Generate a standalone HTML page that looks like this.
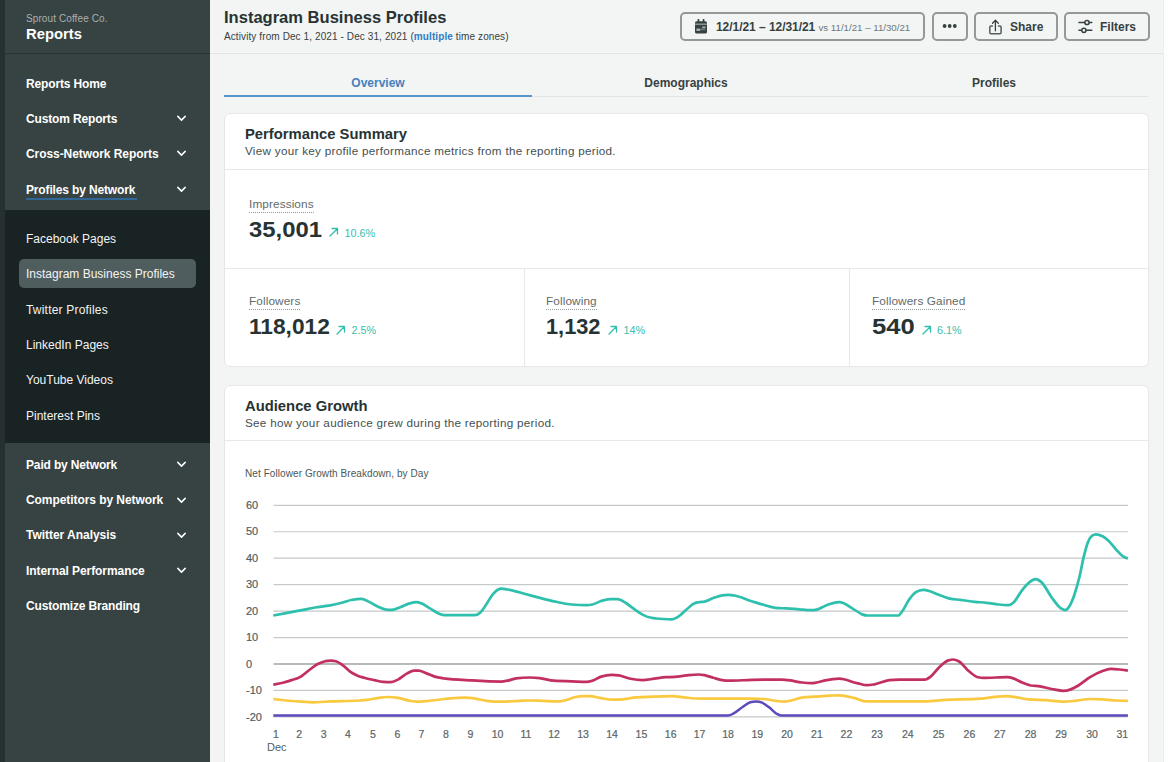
<!DOCTYPE html>
<html lang="en">
<head>
<meta charset="utf-8">
<title>Instagram Business Profiles - Reports</title>
<style>
*{box-sizing:border-box;margin:0;padding:0}
html,body{width:1168px;height:762px;overflow:hidden;background:#f3f4f4}
body{font-family:"Liberation Sans",sans-serif;color:#273333;position:relative;-webkit-font-smoothing:antialiased}
.abs{position:absolute;white-space:nowrap}
/* sidebar */
#strip{left:0;top:0;width:5px;height:762px;background:#263031}
#side{left:5px;top:0;width:205px;height:762px;background:#374242}
#sidehead{left:5px;top:0;width:205px;height:54px;border-bottom:1px solid #2a3435}
#sub{left:5px;top:210px;width:205px;height:233px;background:#1a2324}
#active{left:19px;top:259px;width:177px;height:29px;border-radius:5px;background:#505d5e}
.org{left:26px;top:12.7px;font-size:10px;line-height:12px;color:#a9b0b1;letter-spacing:.1px}
.rep{left:26px;top:25px;font-size:14.8px;line-height:18px;font-weight:bold;color:#fff;letter-spacing:0}
.nav{left:26px;font-size:12px;line-height:16px;font-weight:bold;color:#fff;letter-spacing:-.15px}
.snav{left:26px;font-size:12px;line-height:16px;color:#f3f4f4}
.chev{left:176px;width:11px;height:7px}
.ul{left:26px;top:197.6px;width:111px;height:2px;background:#2f6da6;opacity:.85}
/* header */
#hdr{left:210px;top:0;width:954px;height:54px;border-bottom:1px solid #e3e5e5;background:#f3f4f4}
#rstrip{left:1163px;top:0;width:5px;height:762px;background:#fdfdfd;border-left:1px solid #eceeee}
.title{left:224px;top:8.3px;font-size:16.55px;line-height:20px;font-weight:bold;color:#273333;letter-spacing:0}
.subt{left:224px;top:31px;font-size:10px;line-height:12px;color:#364141;letter-spacing:.1px}
.subt b{color:#2f7dc4}
.btn{top:12px;height:29px;border:2px solid #939899;border-radius:5px;background:#f3f4f4}
.btxt{font-size:12px;line-height:14px;font-weight:bold;color:#364141}
/* tabs */
.tab{top:75.8px;font-size:12px;line-height:14px;font-weight:bold;color:#364141;text-align:center;width:308px}
.tabline{left:224px;top:96px;width:924px;height:1px;background:#e3e5e5}
.tabact{left:224px;top:95px;width:308px;height:2px;background:#5a94cf}
/* cards */
.card{left:224px;width:925px;background:#fff;border:1px solid #e6e8e8;border-radius:6px}
.hline{height:1px;background:#e7e9e9}
.vline{width:1px;background:#e7e9e9}
.ctitle{left:245px;font-size:14.8px;line-height:18px;font-weight:bold;color:#273333}
.cdesc{left:245px;font-size:11.7px;line-height:14px;color:#445051;letter-spacing:.28px}
.mlabel{font-size:11.8px;line-height:14px;color:#5f6b6c;border-bottom:1px dotted #929a9b;padding-bottom:1px;letter-spacing:.1px}
.mval{font-size:22.2px;line-height:26px;font-weight:bold;color:#273333;letter-spacing:0;transform-origin:0 50%}
.mdelta{font-size:10.8px;line-height:14px;color:#35c0ad}
.arr{width:10px;height:10px}
.ylab{left:246px;font-size:11px;line-height:12px;color:#515e5f;-webkit-text-stroke:.2px #515e5f}
.xlabs span{position:absolute;top:728px;width:30px;margin-left:-15px;text-align:center;font-size:10.5px;line-height:12px;color:#5a6667;-webkit-text-stroke:.2px #5a6667}
.ico{position:absolute;overflow:visible}
.chart{position:absolute;left:0;top:0}
</style>
</head>
<body>
<div class="abs" id="side"></div>
<div class="abs" id="strip"></div>
<div class="abs" id="sidehead"></div>
<div class="abs" id="sub"></div>
<div class="abs" id="active"></div>
<div class="abs org">Sprout Coffee Co.</div>
<div class="abs rep">Reports</div>

<div class="abs nav" style="top:76px">Reports Home</div>
<div class="abs nav" style="top:111px">Custom Reports</div>
<div class="abs nav" style="top:146.4px;letter-spacing:-.07px">Cross-Network Reports</div>
<div class="abs nav" style="top:181.6px">Profiles by Network</div>
<div class="abs ul"></div>
<svg class="abs chev" style="top:115px" viewBox="0 0 11 7"><path d="M1.8 1.4l3.7 3.7 3.7-3.7" fill="none" stroke="#fff" stroke-width="1.5" stroke-linecap="round" stroke-linejoin="round"/></svg>
<svg class="abs chev" style="top:150px" viewBox="0 0 11 7"><path d="M1.8 1.4l3.7 3.7 3.7-3.7" fill="none" stroke="#fff" stroke-width="1.5" stroke-linecap="round" stroke-linejoin="round"/></svg>
<svg class="abs chev" style="top:186px" viewBox="0 0 11 7"><path d="M1.8 1.4l3.7 3.7 3.7-3.7" fill="none" stroke="#fff" stroke-width="1.5" stroke-linecap="round" stroke-linejoin="round"/></svg>

<div class="abs snav" style="top:231px">Facebook Pages</div>
<div class="abs snav" style="top:266.2px">Instagram Business Profiles</div>
<div class="abs snav" style="top:301.7px;letter-spacing:.2px">Twitter Profiles</div>
<div class="abs snav" style="top:337px">LinkedIn Pages</div>
<div class="abs snav" style="top:372px">YouTube Videos</div>
<div class="abs snav" style="top:407.7px">Pinterest Pins</div>

<div class="abs nav" style="top:457px">Paid by Network</div>
<div class="abs nav" style="top:492px;letter-spacing:-.07px">Competitors by Network</div>
<div class="abs nav" style="top:527.4px;letter-spacing:-.03px">Twitter Analysis</div>
<div class="abs nav" style="top:563px;letter-spacing:-.07px">Internal Performance</div>
<div class="abs nav" style="top:598.4px">Customize Branding</div>
<svg class="abs chev" style="top:461px" viewBox="0 0 11 7"><path d="M1.8 1.4l3.7 3.7 3.7-3.7" fill="none" stroke="#fff" stroke-width="1.5" stroke-linecap="round" stroke-linejoin="round"/></svg>
<svg class="abs chev" style="top:497px" viewBox="0 0 11 7"><path d="M1.8 1.4l3.7 3.7 3.7-3.7" fill="none" stroke="#fff" stroke-width="1.5" stroke-linecap="round" stroke-linejoin="round"/></svg>
<svg class="abs chev" style="top:532px" viewBox="0 0 11 7"><path d="M1.8 1.4l3.7 3.7 3.7-3.7" fill="none" stroke="#fff" stroke-width="1.5" stroke-linecap="round" stroke-linejoin="round"/></svg>
<svg class="abs chev" style="top:567px" viewBox="0 0 11 7"><path d="M1.8 1.4l3.7 3.7 3.7-3.7" fill="none" stroke="#fff" stroke-width="1.5" stroke-linecap="round" stroke-linejoin="round"/></svg>

<!-- header -->
<div class="abs" id="hdr"></div>
<div class="abs" id="rstrip"></div>
<div class="abs title">Instagram Business Profiles</div>
<div class="abs subt">Activity from Dec 1, 2021 - Dec 31, 2021 (<b>multiple</b> time zones)</div>

<div class="abs btn" style="left:680px;width:245px"></div>
<div class="abs btn" style="left:932px;width:36px"></div>
<div class="abs btn" style="left:974px;width:84px"></div>
<div class="abs btn" style="left:1064px;width:86px"></div>
<div class="abs btxt" style="left:716px;top:19.5px;letter-spacing:-.05px">12/1/21 – 12/31/21 <span style="font-weight:normal;font-size:9.7px;color:#6e797a;letter-spacing:0">vs 11/1/21 – 11/30/21</span></div>
<div class="abs btxt" style="left:1010px;top:19.5px">Share</div>
<div class="abs btxt" style="left:1100px;top:19.5px">Filters</div>


<!-- icons -->
<svg class="ico" style="left:695px;top:19px" width="12" height="14.5" viewBox="0 0 12 14.5">
  <rect x="0" y="2.2" width="12" height="12.3" rx="1.6" fill="#364141"/>
  <rect x="2.6" y="0" width="1.7" height="3.4" rx=".6" fill="#364141"/>
  <rect x="7.7" y="0" width="1.7" height="3.4" rx=".6" fill="#364141"/>
  <rect x="0" y="4.5" width="12" height="1.4" fill="#f3f4f4" opacity=".5"/>
  <rect x="7.2" y="7.5" width="3.3" height="1.7" fill="#f3f4f4" opacity=".6"/>
  <rect x="1.4" y="9.6" width="3.7" height="2.3" fill="#f3f4f4" opacity=".65"/>
  <rect x="5.1" y="9.6" width="5.2" height="1.6" fill="#f3f4f4" opacity=".3"/>
</svg>
<svg class="ico" style="left:940px;top:22px" width="20" height="8" viewBox="0 0 20 8">
  <circle cx="4.6" cy="4" r="1.9" fill="#364141"/><circle cx="9.7" cy="4" r="1.9" fill="#364141"/><circle cx="14.8" cy="4" r="1.9" fill="#364141"/>
</svg>
<svg class="ico" style="left:988px;top:19px" width="15" height="17" viewBox="988 19 15 17" fill="none" stroke="#515e5f" stroke-width="1.5" stroke-linecap="round" stroke-linejoin="round">
  <path d="M992.4,26H991a1.2,1.2 0 0 0 -1.2,1.2v5.4a1.2,1.2 0 0 0 1.2,1.2h8.9a1.2,1.2 0 0 0 1.2,-1.2v-5.4a1.2,1.2 0 0 0 -1.2,-1.2h-1.4"/>
  <path d="M995.4,30.8V20.4M992.5,23.2L995.4,20.3L998.3,23.2" stroke="#364141" stroke-width="1.3"/>
</svg>
<svg class="ico" style="left:1078px;top:18px" width="16" height="17" viewBox="1078 18 16 17" fill="none" stroke="#364141" stroke-width="1.5" stroke-linecap="round">
  <path d="M1079,22.5h5.4M1089.6,22.5h2.2M1079,30.3h2.3M1086.5,30.3h5.3"/>
  <circle cx="1087" cy="22.5" r="2.1"/><circle cx="1083.9" cy="30.3" r="2.1"/>
</svg>
<!-- tabs -->
<div class="abs tabline"></div>
<div class="abs tabact"></div>
<div class="abs tab" style="left:224px;color:#4681bd">Overview</div>
<div class="abs tab" style="left:532px">Demographics</div>
<div class="abs tab" style="left:840px">Profiles</div>

<!-- card 1 -->
<div class="abs card" style="top:113px;height:254px"></div>
<div class="abs ctitle" style="top:125px">Performance Summary</div>
<div class="abs cdesc" style="top:144px">View your key profile performance metrics from the reporting period.</div>
<div class="abs hline" style="left:225px;top:168.5px;width:923px"></div>
<div class="abs hline" style="left:225px;top:268px;width:923px"></div>
<div class="abs vline" style="left:524px;top:269px;height:97px"></div>
<div class="abs vline" style="left:849px;top:269px;height:97px"></div>

<div class="abs mlabel" style="left:249px;top:197px">Impressions</div>
<div class="abs mval" id="v1" style="left:249px;top:216.5px;transform:scaleX(1.074)">35,001</div>
<div class="abs mdelta" style="left:344.4px;top:225.6px">10.6%</div>

<div class="abs mlabel" style="left:249px;top:294px">Followers</div>
<div class="abs mval" id="v2" style="left:248.7px;top:313.7px;transform:scaleX(1.023)">118,012</div>
<div class="abs mdelta" style="left:351.6px;top:322.9px">2.5%</div>

<div class="abs mlabel" style="left:546px;top:294px">Following</div>
<div class="abs mval" id="v3" style="left:546.1px;top:313.7px;transform:scaleX(.981)">1,132</div>
<div class="abs mdelta" style="left:623.4px;top:322.9px">14%</div>

<div class="abs mlabel" style="left:872px;top:294px">Followers Gained</div>
<div class="abs mval" id="v4" style="left:872.2px;top:313.7px;transform:scaleX(1.154)">540</div>
<div class="abs mdelta" style="left:937px;top:322.9px">6.1%</div>

<svg class="ico" style="left:329px;top:227.4px" width="10" height="10" viewBox="0 0 10 10" fill="none" stroke="#2fbfab" stroke-width="1.3" stroke-linecap="round" stroke-linejoin="round"><path d="M1,9L8.3,1.7M3,1.5H8.5V7"/></svg>
<svg class="ico" style="left:336.3px;top:324.6px" width="10" height="10" viewBox="0 0 10 10" fill="none" stroke="#2fbfab" stroke-width="1.3" stroke-linecap="round" stroke-linejoin="round"><path d="M1,9L8.3,1.7M3,1.5H8.5V7"/></svg>
<svg class="ico" style="left:608.3px;top:324.6px" width="10" height="10" viewBox="0 0 10 10" fill="none" stroke="#2fbfab" stroke-width="1.3" stroke-linecap="round" stroke-linejoin="round"><path d="M1,9L8.3,1.7M3,1.5H8.5V7"/></svg>
<svg class="ico" style="left:921.9px;top:324.6px" width="10" height="10" viewBox="0 0 10 10" fill="none" stroke="#2fbfab" stroke-width="1.3" stroke-linecap="round" stroke-linejoin="round"><path d="M1,9L8.3,1.7M3,1.5H8.5V7"/></svg>
<!-- card 2 -->
<div class="abs card" style="top:385px;height:400px"></div>
<div class="abs ctitle" style="top:397px">Audience Growth</div>
<div class="abs cdesc" style="top:416px">See how your audience grew during the reporting period.</div>
<div class="abs hline" style="left:225px;top:440px;width:923px"></div>
<div class="abs" style="left:245px;top:467.9px;font-size:10px;line-height:12px;color:#4b5859;letter-spacing:.08px">Net Follower Growth Breakdown, by Day</div>

<div class="abs ylab" style="top:499px">60</div>
<div class="abs ylab" style="top:525px">50</div>
<div class="abs ylab" style="top:552px">40</div>
<div class="abs ylab" style="top:578px">30</div>
<div class="abs ylab" style="top:605px">20</div>
<div class="abs ylab" style="top:631px">10</div>
<div class="abs ylab" style="top:658px">0</div>
<div class="abs ylab" style="top:684px">-10</div>
<div class="abs ylab" style="top:711px">-20</div>

<svg class="chart" width="1168" height="762" viewBox="0 0 1168 762">
  <g stroke="#c5c9c9" stroke-width="1.2">
    <line x1="273.5" x2="1128" y1="716.90" y2="716.90"/><line x1="273.5" x2="1128" y1="690.45" y2="690.45"/><line x1="273.5" x2="1128" y1="637.55" y2="637.55"/><line x1="273.5" x2="1128" y1="611.10" y2="611.10"/><line x1="273.5" x2="1128" y1="584.65" y2="584.65"/><line x1="273.5" x2="1128" y1="558.20" y2="558.20"/><line x1="273.5" x2="1128" y1="531.75" y2="531.75"/><line x1="273.5" x2="1128" y1="505.30" y2="505.30"/>
  </g>
  <line x1="273.5" x2="1128" y1="664.00" y2="664.00" stroke="#9fa5a5" stroke-width="1.4"/>
  <g fill="none" stroke-linecap="butt" stroke-linejoin="round">
    <path d="M273.3,699.0C282.7,700.1 292.2,701.1 301.6,701.7C305.2,701.9 308.7,702.3 312.3,702.3C318.3,702.3 324.3,701.7 330.3,701.4C339.7,701.0 349.2,701.1 358.6,700.5C361.4,700.3 364.1,700.2 366.9,699.9C371.3,699.4 375.7,698.1 380.2,697.6C383.1,697.2 386.1,697.0 389.0,697.0C392.0,697.0 394.9,697.4 397.9,697.9C401.8,698.5 405.8,700.1 409.7,700.8C412.2,701.2 414.6,701.7 417.1,701.7C420.0,701.7 423.0,701.4 425.9,701.1C432.1,700.6 438.2,699.7 444.3,699.0C448.5,698.6 452.7,698.1 457.0,697.9C459.9,697.7 462.9,697.6 465.8,697.6C468.1,697.6 470.3,697.9 472.6,698.2C477.2,698.7 481.9,700.3 486.5,700.8C491.4,701.4 496.3,701.7 501.3,701.7C507.2,701.7 513.1,701.0 519.0,700.8C522.5,700.7 526.1,700.5 529.6,700.5C533.9,700.5 538.3,700.7 542.6,700.8C548.3,701.0 554.0,701.4 559.8,701.4C561.7,701.4 563.7,700.7 565.7,700.2C568.6,699.5 571.6,698.0 574.5,697.3C577.5,696.6 580.4,696.1 583.4,696.1C585.4,696.1 587.3,696.1 589.3,696.1C593.2,696.1 597.2,697.6 601.1,698.2C605.0,698.7 609.0,699.6 612.9,699.6C615.9,699.6 618.8,699.5 621.8,699.3C626.7,699.0 631.6,697.6 636.5,697.3C642.5,696.9 648.4,696.9 654.3,696.7C660.2,696.5 666.1,696.1 672.0,696.1C675.9,696.1 679.9,696.9 683.8,697.3C687.7,697.7 691.7,698.3 695.6,698.5C702.5,698.6 709.4,698.7 716.3,698.7C728.1,698.7 739.9,698.7 751.7,698.7C755.7,698.7 759.6,698.8 763.5,699.0C767.5,699.2 771.4,700.3 775.3,700.8C778.3,701.2 781.3,701.7 784.2,701.7C786.2,701.7 788.1,701.2 790.1,700.8C794.0,700.1 798.0,698.1 801.9,697.6C806.2,697.0 810.4,697.0 814.6,696.7C818.3,696.4 821.9,696.2 825.5,695.9C828.0,695.8 830.5,695.6 832.9,695.5C835.0,695.4 837.2,695.3 839.3,695.3C844.1,695.3 849.0,696.7 853.9,697.9C857.8,698.8 861.7,701.4 865.7,701.4C868.6,701.4 871.6,701.4 874.5,701.4C891.3,701.4 908.0,701.4 924.7,701.4C931.6,701.4 938.5,700.3 945.4,699.9C957.2,699.3 969.0,699.5 980.8,698.7C985.8,698.4 990.7,697.3 995.6,696.8C999.1,696.5 1002.5,696.1 1005.9,696.1C1009.4,696.1 1012.8,696.8 1016.3,697.3C1020.2,697.8 1024.2,698.9 1028.1,699.3C1034.0,699.9 1039.9,699.8 1045.8,700.2C1051.7,700.6 1057.6,701.7 1063.5,701.7C1067.5,701.7 1071.4,701.2 1075.3,700.8C1080.3,700.3 1085.2,699.0 1090.1,699.0C1094.0,699.0 1098.0,699.1 1101.9,699.3C1106.8,699.6 1111.8,700.3 1116.7,700.5C1120.4,700.7 1124.2,700.8 1127.9,700.8" stroke="#f9c940" stroke-width="2.7"/>
    <path d="M273.3,715.6C424.9,715.6 576.5,715.6 728.1,715.6C730.1,715.6 732.0,714.3 734.0,713.2C737.0,711.6 739.9,708.7 742.9,706.7C745.3,705.1 747.8,703.0 750.2,702.3C752.2,701.7 754.2,701.4 756.2,701.4C758.1,701.4 760.1,701.8 762.1,702.6C764.5,703.6 767.0,705.7 769.4,707.6C771.9,709.5 774.4,712.4 776.8,713.8C778.3,714.6 779.8,715.6 781.3,715.6C896.8,715.6 1012.4,715.6 1127.9,715.6" stroke="#5b4bbd" stroke-width="2.5"/>
    <path d="M273.3,684.6C276.4,684.0 279.6,683.4 282.7,682.7C285.7,681.9 288.6,681.1 291.6,680.1C294.5,679.2 297.5,678.6 300.4,676.9C303.4,675.2 306.3,672.1 309.3,670.0C312.3,667.8 315.2,665.3 318.2,663.8C320.5,662.6 322.9,661.8 325.2,661.2C327.0,660.9 328.8,660.7 330.6,660.7C332.3,660.7 334.1,660.8 335.9,661.2C338.2,661.8 340.6,663.7 343.0,665.4C345.3,667.1 347.7,669.9 350.1,671.6C352.4,673.3 354.8,674.4 357.1,675.4C359.5,676.5 361.9,677.1 364.2,677.8C367.6,678.8 370.9,679.4 374.3,680.1C377.2,680.8 380.2,681.7 383.1,681.9C385.6,682.1 388.0,682.2 390.5,682.2C393.0,682.2 395.4,680.8 397.9,679.6C400.8,678.1 403.8,675.2 406.8,673.6C409.2,672.4 411.7,670.7 414.1,670.7C415.6,670.7 417.1,670.7 418.6,670.7C421.0,670.7 423.5,672.2 425.9,673.1C428.9,674.1 431.9,675.7 434.8,676.6C437.8,677.5 440.7,677.9 443.7,678.4C453.0,679.7 462.4,679.9 471.7,680.4C481.6,681.0 491.4,681.6 501.3,681.6C503.2,681.6 505.2,681.1 507.2,680.7C510.1,680.2 513.1,678.8 516.0,678.4C520.5,677.8 525.1,677.5 529.6,677.5C532.9,677.5 536.3,677.7 539.6,678.1C544.4,678.6 549.1,680.4 553.9,680.7C559.8,681.1 565.7,681.1 571.6,681.3C576.6,681.5 581.6,681.9 586.6,681.9C588.5,681.9 590.4,681.3 592.3,680.7C595.2,679.8 598.2,677.6 601.1,676.6C604.6,675.5 608.0,674.8 611.4,674.8C613.9,674.8 616.4,675.0 618.8,675.4C622.8,676.0 626.7,677.9 630.6,678.7C634.6,679.5 638.5,680.1 642.5,680.1C646.4,680.1 650.3,679.2 654.3,678.7C658.2,678.2 662.1,677.5 666.1,677.2C669.0,677.0 672.0,677.1 674.9,676.9C678.9,676.6 682.8,675.8 686.8,675.4C690.7,675.0 694.6,674.5 698.6,674.5C700.5,674.5 702.5,674.8 704.5,675.1C707.4,675.7 710.4,676.9 713.3,677.8C716.3,678.6 719.2,679.7 722.2,680.1C724.6,680.5 726.9,680.7 729.3,680.7C736.8,680.7 744.2,680.0 751.7,679.8C761.6,679.7 771.4,679.6 781.3,679.6C784.2,679.6 787.2,680.0 790.1,680.4C794.0,681.0 798.0,682.1 801.9,682.5C804.9,682.8 807.8,683.1 810.8,683.1C812.8,683.1 814.7,682.8 816.7,682.5C819.6,682.1 822.6,681.0 825.5,680.4C828.0,679.9 830.5,679.4 832.9,679.1C835.0,678.9 837.2,678.7 839.3,678.7C845.1,678.7 851.0,681.8 856.8,683.1C860.3,683.8 863.7,685.2 867.1,685.2C869.6,685.2 872.1,684.7 874.5,684.3C879.5,683.4 884.4,680.7 889.3,680.1C892.7,679.7 896.2,679.6 899.6,679.6C908.0,679.6 916.4,679.6 924.7,679.6C926.7,679.6 928.7,678.1 930.6,676.6C933.6,674.4 936.5,669.6 939.5,666.9C942.5,664.1 945.4,661.4 948.4,660.4C950.0,659.8 951.7,659.5 953.4,659.5C955.2,659.5 956.9,660.3 958.7,661.2C962.1,663.1 965.6,668.5 969.0,671.3C972.0,673.7 974.9,676.6 977.9,677.2C979.9,677.6 981.8,677.8 983.8,677.8C991.7,677.8 999.5,677.2 1007.4,677.2C1009.4,677.2 1011.4,677.8 1013.3,678.4C1016.3,679.3 1019.2,681.3 1022.2,682.5C1025.1,683.7 1028.1,684.9 1031.0,685.5C1034.0,686.0 1037.0,685.9 1039.9,686.3C1043.8,686.9 1047.8,688.3 1051.7,689.0C1055.7,689.7 1059.6,690.8 1063.5,690.8C1065.5,690.8 1067.5,690.5 1069.4,689.9C1072.4,689.0 1075.3,687.2 1078.3,685.5C1082.2,683.2 1086.2,679.6 1090.1,677.2C1094.0,674.8 1098.0,672.7 1101.9,671.3C1104.9,670.2 1107.8,668.9 1110.8,668.9C1113.7,668.9 1116.7,669.2 1119.6,669.5C1122.4,669.8 1125.2,670.2 1127.9,670.7" stroke="#c2305f" stroke-width="2.7"/>
    <path d="M273.3,615.5C282.7,613.7 292.2,612.0 301.6,610.2C306.1,609.3 310.7,608.3 315.2,607.5C320.2,606.7 325.2,606.4 330.3,605.4C334.1,604.7 337.9,603.8 341.8,602.8C345.2,601.9 348.7,600.5 352.1,599.8C355.1,599.3 358.0,598.9 361.0,598.9C362.9,598.9 364.9,599.9 366.9,600.7C370.3,602.0 373.8,604.8 377.2,606.3C380.2,607.6 383.1,609.3 386.1,609.6C388.0,609.8 390.0,609.9 392.0,609.9C394.9,609.9 397.9,608.0 400.8,606.9C403.8,605.8 406.8,604.2 409.7,603.4C411.9,602.8 414.0,602.2 416.2,602.2C418.0,602.2 419.7,602.7 421.5,603.4C424.5,604.4 427.4,607.0 430.4,608.7C433.3,610.4 436.3,612.5 439.2,613.7C440.9,614.4 442.6,615.2 444.3,615.2C454.4,615.2 464.5,615.2 474.7,615.2C476.6,615.2 478.6,614.1 480.6,612.2C482.5,610.3 484.5,606.9 486.5,604.0C488.5,601.0 490.4,597.2 492.4,594.8C494.4,592.4 496.3,590.4 498.3,589.5C499.3,589.0 500.3,588.7 501.3,588.7C503.2,588.7 505.2,589.2 507.2,589.5C514.6,590.6 522.1,593.1 529.6,595.1C533.9,596.2 538.3,597.5 542.6,598.6C547.8,600.0 553.1,601.1 558.3,602.2C562.7,603.1 567.1,604.2 571.6,604.5C576.6,604.9 581.6,605.1 586.6,605.1C588.5,605.1 590.4,604.9 592.3,604.5C595.2,603.9 598.2,601.9 601.1,601.0C604.1,600.1 607.0,599.2 610.0,599.2C612.4,599.2 614.9,599.2 617.4,599.2C619.8,599.2 622.3,600.8 624.7,602.2C627.7,603.8 630.6,606.6 633.6,608.7C636.5,610.7 639.5,613.1 642.5,614.6C645.4,616.1 648.4,617.2 651.3,617.8C655.3,618.6 659.2,618.8 663.1,619.0C666.1,619.2 669.0,619.3 672.0,619.3C674.0,619.3 675.9,618.1 677.9,616.9C680.8,615.2 683.8,611.7 686.8,609.3C689.2,607.2 691.7,604.5 694.1,603.4C695.6,602.7 697.1,602.5 698.6,602.2C700.5,601.8 702.5,602.0 704.5,601.6C707.4,601.0 710.4,599.1 713.3,598.0C716.3,597.0 719.2,595.9 722.2,595.4C724.2,595.0 726.1,594.8 728.1,594.8C730.6,594.8 733.0,595.2 735.5,595.7C740.9,596.7 746.3,599.6 751.7,601.3C755.7,602.5 759.6,603.8 763.5,604.8C767.5,605.9 771.4,607.4 775.3,607.8C779.0,608.2 782.6,608.2 786.3,608.4C790.5,608.6 794.7,609.0 799.0,609.3C802.9,609.6 806.8,610.2 810.8,610.2C812.8,610.2 814.7,610.0 816.7,609.6C819.6,609.0 822.6,606.9 825.5,605.7C828.0,604.8 830.5,603.7 832.9,603.1C835.0,602.5 837.2,602.1 839.3,602.1C844.1,602.1 849.0,606.5 853.9,609.3C856.8,610.9 859.8,613.6 862.7,614.6C864.2,615.1 865.7,615.5 867.1,615.5C877.5,615.5 887.8,615.5 898.2,615.5C899.6,615.5 901.1,612.8 902.6,610.7C904.6,608.1 906.5,603.3 908.5,600.4C911.0,596.8 913.4,593.7 915.9,592.1C918.3,590.6 920.8,589.8 923.3,589.8C925.7,589.8 928.2,590.8 930.6,591.5C933.6,592.5 936.5,594.0 939.5,595.1C942.9,596.4 946.4,597.8 949.8,598.6C953.3,599.4 956.7,599.4 960.2,599.8C965.1,600.4 970.0,601.4 974.9,601.9C978.9,602.3 982.8,602.3 986.8,602.8C990.7,603.2 994.6,604.1 998.6,604.5C1002.0,604.9 1005.5,605.1 1008.9,605.1C1010.4,605.1 1011.9,604.0 1013.3,602.8C1016.3,600.3 1019.2,593.7 1022.2,590.1C1024.7,587.0 1027.1,584.0 1029.6,582.1C1031.5,580.6 1033.5,579.1 1035.5,579.1C1037.4,579.1 1039.4,580.4 1041.4,582.1C1044.8,585.1 1048.3,592.9 1051.7,597.5C1054.7,601.4 1057.6,606.0 1060.6,608.1C1062.1,609.1 1063.5,610.2 1065.0,610.2C1066.5,610.2 1068.0,608.6 1069.4,606.3C1071.1,603.7 1072.8,599.4 1074.5,594.5C1076.1,589.6 1077.8,583.7 1079.5,576.8C1081.0,570.7 1082.4,562.1 1083.9,556.1C1085.3,550.6 1086.7,545.3 1088.0,541.9C1089.4,538.5 1090.8,536.7 1092.2,535.7C1093.5,534.8 1094.7,534.4 1096.0,534.4C1098.2,534.4 1100.3,535.2 1102.5,536.3C1104.8,537.5 1107.0,539.5 1109.3,541.6C1111.8,544.0 1114.2,547.6 1116.7,550.2C1118.7,552.3 1120.6,554.7 1122.6,556.1C1124.4,557.4 1126.1,557.9 1127.9,558.5" stroke="#2fbfad" stroke-width="2.7"/>
  </g>
</svg>

<div class="xlabs"><span style="left:276.0px">1</span><span style="left:299.2px">2</span><span style="left:323.6px">3</span><span style="left:348.0px">4</span><span style="left:372.9px">5</span><span style="left:397.3px">6</span><span style="left:421.4px">7</span><span style="left:445.8px">8</span><span style="left:470.5px">9</span><span style="left:497.5px">10</span><span style="left:526.0px">11</span><span style="left:554.0px">12</span><span style="left:583.1px">13</span><span style="left:612.1px">14</span><span style="left:641.4px">15</span><span style="left:670.7px">16</span><span style="left:699.5px">17</span><span style="left:728.0px">18</span><span style="left:757.3px">19</span><span style="left:787.1px">20</span><span style="left:816.9px">21</span><span style="left:846.4px">22</span><span style="left:877.0px">23</span><span style="left:907.8px">24</span><span style="left:938.6px">25</span><span style="left:969.4px">26</span><span style="left:999.8px">27</span><span style="left:1030.6px">28</span><span style="left:1061.1px">29</span><span style="left:1092.0px">30</span><span style="left:1122.3px">31</span></div>
<div class="abs" style="left:267px;top:741px;font-size:11px;line-height:12px;color:#515e5f">Dec</div>

</body>
</html>
